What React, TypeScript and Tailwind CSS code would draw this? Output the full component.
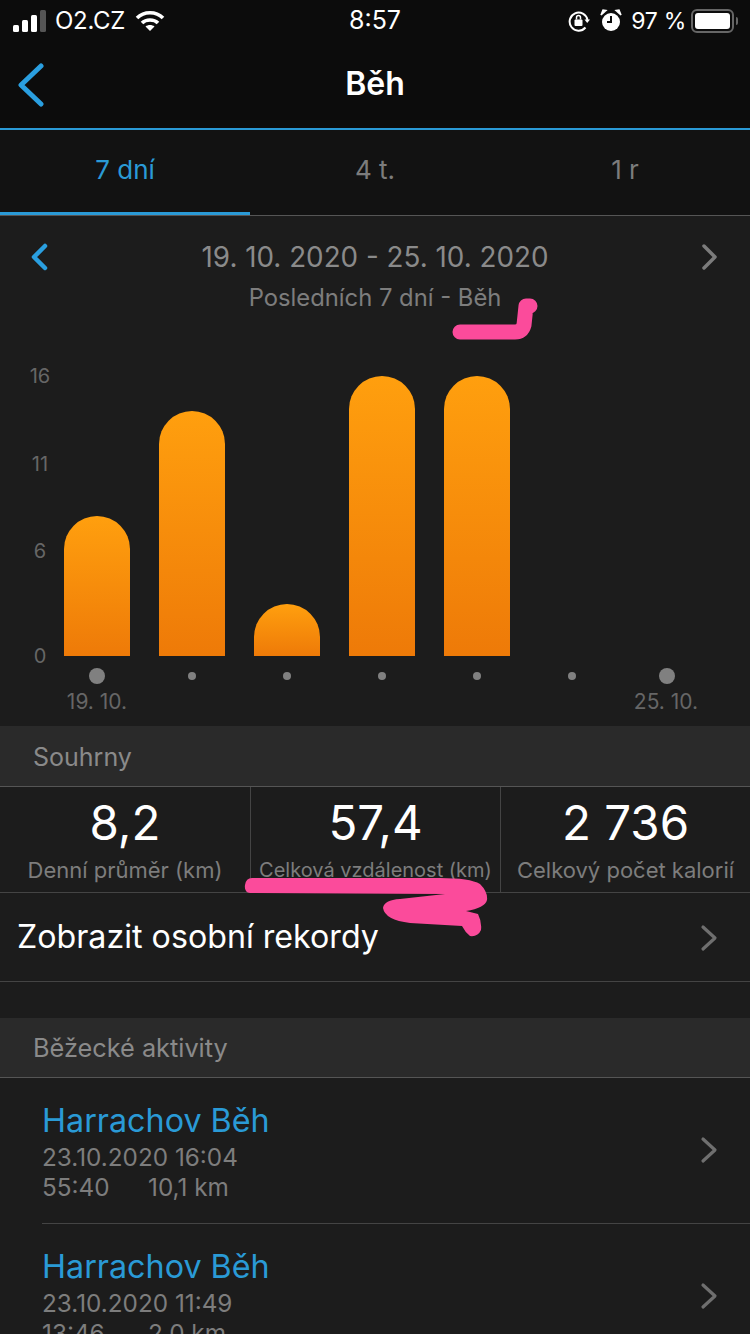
const FONT = { fontFamily: 'Inter, "Noto Sans", sans-serif' }

const BARS = [
  { day: 0, height: 140 },
  { day: 1, height: 245 },
  { day: 2, height: 52 },
  { day: 3, height: 280 },
  { day: 4, height: 280 },
]

const ACTIVITIES = [
  { name: 'Harrachov Běh', date: '23.10.2020 16:04', time: '55:40', dist: '10,1 km' },
  { name: 'Harrachov Běh', date: '23.10.2020 11:49', time: '13:46', dist: '2,0 km' },
]

function RowChevron() {
  return (
    <svg width="18" height="28" viewBox="0 0 18 28" fill="none" stroke="#6f6f6f" strokeWidth="3.2" strokeLinecap="round" strokeLinejoin="round">
      <path d="M3 3 L15 14 L3 25" />
    </svg>
  )
}

function StatusBar() {
  return (
    <div className="relative flex h-[42px] items-center justify-between pl-[13px] pr-[12px] text-white">
      <div className="flex items-center">
        <svg width="35" height="22" viewBox="0 0 35 22" fill="white">
          <rect x="0" y="15" width="6" height="7" rx="1.5" />
          <rect x="9" y="10" width="6" height="12" rx="1.5" />
          <rect x="18" y="5" width="6" height="17" rx="1.5" />
          <rect x="27" y="0" width="6" height="22" rx="1.5" fill="#555" />
        </svg>
        <span className="ml-[7px] text-[24px] tracking-[-0.3px]">O2.CZ</span>
        <svg className="ml-[10px]" width="30" height="22" viewBox="0 0 30 22" fill="none" stroke="white" strokeWidth="3.6">
          <path d="M2 8 C9 1 21 1 28 8" />
          <path d="M7 13 C11 9 19 9 23 13" />
          <path d="M15 21 L10.5 16.5 C13 14.5 17 14.5 19.5 16.5 Z" fill="white" stroke="none" />
        </svg>
      </div>
      <span className="absolute left-0 right-0 text-center text-[25px]">8:57</span>
      <div className="flex items-center">
        <svg width="22" height="22" viewBox="0 0 22 22" fill="none" stroke="white" strokeWidth="2">
          <path d="M17.5 17.5 A9 9 0 1 1 19.5 10" />
          <path d="M16.5 9.5 H22 L19.2 13 Z" fill="white" stroke="none" />
          <rect x="6.5" y="9.5" width="8" height="6.5" rx="1" fill="white" stroke="none" />
          <path d="M8.5 9.5 V7.5 a2 2 0 0 1 4 0 V9.5" strokeWidth="1.5" />
        </svg>
        <svg className="ml-[10px]" width="22" height="24" viewBox="0 0 22 24" fill="white">
          <circle cx="11" cy="13" r="9" />
          <path d="M11 7 V13 H7" stroke="#0c0c0c" strokeWidth="2" fill="none" />
          <path d="M1 6 L6 1.5 L3 1 Z M21 6 L16 1.5 L19 1 Z" stroke="white" strokeWidth="1.5" />
        </svg>
        <span className="ml-[9px] text-[23px] tracking-[-0.3px]">97 %</span>
        <div className="ml-[5px] flex h-[24px] w-[43px] items-center rounded-[6px] border-2 border-[#666] p-[2px]">
          <div className="h-full w-full rounded-[3px] bg-white" />
        </div>
        <div className="ml-[2px] h-[8px] w-[2px] rounded-r bg-[#666]" />
      </div>
    </div>
  )
}

function Header() {
  return (
    <div className="relative flex h-[88px] items-center justify-center border-b-2 border-[#2a9ad6] pb-[2px]">
      <svg className="absolute left-[17px] top-[21px]" width="28" height="44" viewBox="0 0 28 44" fill="none" stroke="#2a9fe0" strokeWidth="5" strokeLinecap="round" strokeLinejoin="round">
        <path d="M24 3 L4 22 L24 41" />
      </svg>
      <span className="text-[32px] font-semibold text-white">Běh</span>
    </div>
  )
}

function Tabs() {
  return (
    <div className="flex h-[86px] border-b border-[#555] bg-[#121212]">
      <div className="flex w-1/3 items-center justify-center border-b-[3px] border-[#2a9ad6] pb-[3px] text-[26px] text-[#2a9ad6]">7 dní</div>
      <div className="flex w-1/3 items-center justify-center pb-[6px] text-[26px] text-[#7c7c7c]">4 t.</div>
      <div className="flex w-1/3 items-center justify-center pb-[6px] text-[26px] text-[#7c7c7c]">1 r</div>
    </div>
  )
}

function Chart() {
  return (
    <div className="pl-[64px] pt-[62px]">
      <div className="relative flex h-[280px] items-end gap-[29px]">
        <div className="absolute left-[-64px] top-[-12px] flex h-[292px] w-[80px] flex-col items-center text-[20px] leading-[24px] text-[#666]">
          <span>16</span>
          <span className="mt-[64px]">11</span>
          <span className="mt-[63px]">6</span>
          <span className="mt-[81px]">0</span>
        </div>
        {BARS.map((bar) => (
          <div
            key={bar.day}
            className="w-[66px] rounded-t-[33px] bg-gradient-to-b from-[#ff9f0e] to-[#ee7a08]"
            style={{ height: bar.height }}
          />
        ))}
      </div>
      <div className="ml-[-15px] mt-[12px] flex h-[16px] items-center">
        {[0, 1, 2, 3, 4, 5, 6].map((i) => (
          <div key={i} className="flex w-[95px] shrink-0 justify-center">
            <div className={i === 0 || i === 6 ? 'h-[16px] w-[16px] rounded-full bg-[#808080]' : 'h-[8px] w-[8px] rounded-full bg-[#808080]'} />
          </div>
        ))}
      </div>
      <div className="mt-[6px] flex h-[24px] justify-between pr-[51px] text-[21px] leading-[24px] text-[#666]">
        <span className="w-[66px] whitespace-nowrap text-center">19. 10.</span>
        <span className="w-[66px] whitespace-nowrap text-center">25. 10.</span>
      </div>
    </div>
  )
}

export default function App() {
  return (
    <div className="relative h-[1334px] w-[750px] overflow-hidden bg-[#1c1c1c]" style={FONT}>
      <div className="bg-[#0c0c0c]">
        <StatusBar />
        <Header />
      </div>
      <Tabs />

      <div className="relative h-[510px]">
        <div className="flex h-[58px] items-end justify-center text-[27.8px] leading-[34px] text-[#8a8a8a]">
          19. 10. 2020 - 25. 10. 2020
        </div>
        <svg className="absolute left-[30px] top-[26px]" width="20" height="32" viewBox="0 0 20 32" fill="none" stroke="#2a9fe0" strokeWidth="4.5" strokeLinecap="round" strokeLinejoin="round">
          <path d="M15 4 L4 15 L15 26" />
        </svg>
        <svg className="absolute left-[700px] top-[26px]" width="20" height="32" viewBox="0 0 20 32" fill="none" stroke="#7c7c7c" strokeWidth="3.5" strokeLinecap="round" strokeLinejoin="round">
          <path d="M4 4 L15 15 L4 26" />
        </svg>
        <div className="mt-[8px] text-center text-[23.8px] leading-[32px] text-[#7d7d7d]">Posledních 7 dní - Běh</div>
        <Chart />
      </div>

      <div className="flex h-[61px] items-center border-b border-[#555] bg-[#2a2a2a] pl-[33px] pt-[3px] text-[25px] text-[#8a8a8a]">
        Souhrny
      </div>
      <div className="flex h-[106px] border-b border-[#444]">
        <div className="flex w-1/3 flex-col items-center">
          <span className="mt-[8px] text-[47.5px] leading-[56px] text-white">8,2</span>
          <span className="mt-[5px] whitespace-nowrap text-[22px] leading-[28px] text-[#7d7d7d]">Denní průměr (km)</span>
        </div>
        <div className="flex w-1/3 flex-col items-center border-l border-[#444]">
          <span className="mt-[8px] text-[47.5px] leading-[56px] text-white">57,4</span>
          <span className="mt-[5px] whitespace-nowrap text-[20px] leading-[28px] text-[#7d7d7d]">Celková vzdálenost (km)</span>
        </div>
        <div className="flex w-1/3 flex-col items-center border-l border-[#444]">
          <span className="mt-[8px] text-[47.5px] leading-[56px] text-white">2 736</span>
          <span className="mt-[5px] whitespace-nowrap text-[22px] leading-[28px] text-[#7d7d7d]">Celkový počet kalorií</span>
        </div>
      </div>
      <div className="flex h-[89px] items-center justify-between border-b border-[#444] pl-[17px] pr-[32px] pt-[1px] text-[32.2px] text-white">
        <span>Zobrazit osobní rekordy</span>
        <RowChevron />
      </div>

      <div className="mt-[36px] flex h-[60px] items-center border-b border-[#555] bg-[#2a2a2a] pl-[33px] text-[25.3px] text-[#8a8a8a]">
        Běžecké aktivity
      </div>
      <div className="pl-[42px]">
        {ACTIVITIES.map((a, i) => (
          <div key={i} className="flex h-[146px] justify-between border-b border-[#444] pr-[32px] pt-[23px]">
            <div>
              <div className="text-[32.3px] leading-[39px] text-[#2a9ad6]">{a.name}</div>
              <div className="text-[24.3px] leading-[34px] text-[#7d7d7d]">{a.date}</div>
              <div className="flex text-[24.3px] leading-[26px] text-[#7d7d7d]">
                <span className="w-[106px]">{a.time}</span>
                <span>{a.dist}</span>
              </div>
            </div>
            <div className="mt-[35px]">
              <RowChevron />
            </div>
          </div>
        ))}
      </div>

      {/* marker scribbles over the screenshot */}
      <svg className="pointer-events-none absolute left-0 top-0" width="750" height="1334" fill="#fb4b9b">
        <path d="M460 332 H515 Q522 332 524 325 L526 306 H530" fill="none" stroke="#fb4b9b" strokeWidth="15" strokeLinecap="round" strokeLinejoin="round" />
        <path d="M252 878 L440 878 Q470 878 480 884 Q488 892 487 900 Q485 908 466 911 L478 914 Q482 922 481 930 Q478 937 470 936 Q465 932 462 926 L410 923 Q385 920 383 908 Q384 900 400 899 L445 894 L250 893 Q244 892 245 885 Q246 878 252 878 Z" />
      </svg>
    </div>
  )
}
